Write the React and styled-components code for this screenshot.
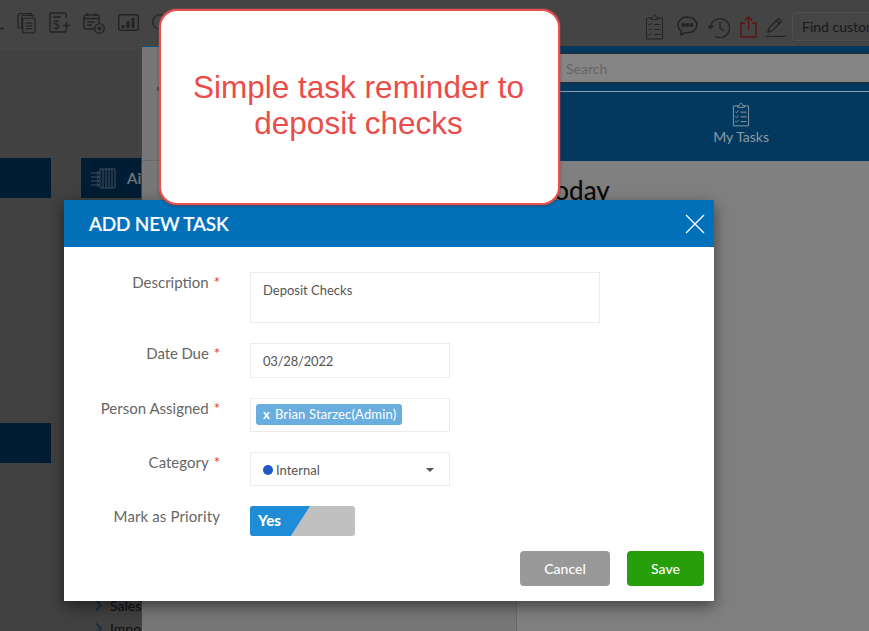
import React from "react";
import styled, { createGlobalStyle } from "styled-components";

const Global = createGlobalStyle`
  html, body { margin: 0; padding: 0; background: #424242; overflow: hidden; }
  * { box-sizing: border-box; }
`;

const Page = styled.div`
  position: relative;
  width: 869px;
  height: 631px;
  overflow: hidden;
  background: #414141;
  font-family: Lato, "Open Sans", sans-serif;
`;

/* ---------- dimmed application behind the modals ---------- */
const Toolbar = styled.header`
  height: 50px;
  background: #444444;
  display: flex;
  justify-content: space-between;
  align-items: flex-start;
  overflow: hidden;
`;
const IconGroup = styled.div`
  display: flex;
  align-items: flex-start;
  gap: ${(p) => p.$gap}px;
  margin-left: ${(p) => p.$ml || 0}px;
  padding-top: ${(p) => p.$pt || 0}px;
`;
const ToolSvg = styled.svg`
  display: block;
  flex: none;
  margin-top: ${(p) => p.$mt || 0}px;
  margin-left: ${(p) => p.$ml || 0}px;
  fill: none;
  stroke: ${(p) => p.$color || "#232323"};
  stroke-width: ${(p) => p.$sw || 1.3};
`;
const DollarMark = styled.text`
  font-family: "Liberation Sans", Arial, sans-serif;
  font-size: 12px;
  fill: #232323;
  stroke: none;
`;
const FindBox = styled.div`
  flex: none;
  width: 110px;
  height: 29px;
  margin: -2px -33px 0 6px;
  padding: 0 9px;
  border: 1px solid #4f4f4f;
  border-radius: 4px;
  background: #454545;
  color: #191919;
  font-size: 14px;
  line-height: 27px;
  white-space: nowrap;
  overflow: hidden;
`;
const Backdrop = styled.main`
  display: flex;
  gap: 30px;
  height: 581px;
  padding-top: 108px;
`;
const Column = styled.div`
  width: ${(p) => p.$w}px;
  flex: none;
`;
const Tile = styled.div`
  height: 40px;
  background: #011d33;
  margin-top: ${(p) => p.$mt || 0}px;
  display: flex;
  align-items: center;
  padding-left: 10px;
  gap: 11px;
  overflow: hidden;
  color: #6c7074;
  font-size: 15px;
  font-weight: 700;
`;
const TreeList = styled.ul`
  list-style: none;
  margin: 399px 0 0;
  padding: 0 0 0 14px;
  display: flex;
  flex-direction: column;
  gap: 6px;
`;
const TreeItem = styled.li`
  display: flex;
  align-items: center;
  gap: 8px;
  height: 17px;
  color: #0f0f0f;
  font-size: 14px;
  white-space: nowrap;
`;

/* ---------- task panel behind the dialog ---------- */
const TaskPanel = styled.section`
  position: absolute;
  left: 141px;
  top: 46px;
  right: 0;
  bottom: 0;
  display: grid;
  grid-template-columns: 376px 1fr;
`;
const ListPane = styled.div`
  background: #777777;
  border-left: 1px solid #0c5385;
  border-top: 1px solid #0c5385;
  border-right: 1px solid #696969;
`;
const ListHead = styled.div`
  height: 114px;
  border-bottom: 1px solid #686868;
  padding: 40px 0 0 15px;
`;
const BackMark = styled.span`
  display: block;
  width: 3px;
  height: 4px;
  background: #4a4a4a;
`;
const DetailPane = styled.div`
  background: #808080;
  display: flex;
  flex-direction: column;
`;
const BlueHead = styled.div`
  height: 115px;
  background: #03395f;
  padding-top: 7px;
`;
const SearchBar = styled.div`
  height: 30px;
  background: #858585;
  border-top: 1px solid #2c2c2c;
  border-bottom: 1px solid #2c2c2c;
  padding-left: 49px;
  color: #666666;
  font-size: 14px;
  line-height: 30px;
`;
const HeadRule = styled.div`
  height: 1px;
  margin: 8px 0 0;
  background: #8d9aa4;
`;
const TabRow = styled.nav`
  display: flex;
  justify-content: flex-end;
  padding: 10px 100px 0 0;
`;
const Tab = styled.div`
  display: flex;
  flex-direction: column;
  align-items: center;
  gap: 1px;
  color: #8e9aa3;
  font-size: 14px;
  line-height: 17px;
`;
const DayTitle = styled.h2`
  margin: 14px 0 0 25px;
  color: #0c0c0c;
  font-size: 26px;
  line-height: 30px;
  font-weight: 500;
`;

/* ---------- dialog ---------- */
const Dialog = styled.section`
  position: absolute;
  left: 64px;
  top: 200px;
  width: 650px;
  height: 401px;
  background: #ffffff;
  box-shadow: 0 5px 15px rgba(0, 0, 0, 0.5);
  display: flex;
  flex-direction: column;
`;
const DialogHead = styled.div`
  height: 47px;
  flex: none;
  background: #0271b9;
  display: flex;
  align-items: center;
  justify-content: space-between;
  padding: 0 9px 0 25px;
`;
const DialogTitle = styled.h1`
  margin: 0;
  color: #ffffff;
  font-size: 19px;
  font-weight: 500;
  line-height: 47px;
  letter-spacing: -0.2px;
  -webkit-text-stroke: 0.2px #ffffff;
`;
const Form = styled.div`
  flex: 1;
  display: flex;
  flex-direction: column;
  padding-top: 25px;
`;
const Row = styled.div`
  display: grid;
  grid-template-columns: 156px 1fr;
  column-gap: 30px;
  margin-bottom: 20px;
`;
const Label = styled.label`
  text-align: right;
  color: #666666;
  font-size: 15px;
  line-height: 20px;
  letter-spacing: ${(p) => p.$track || 0}px;
`;
const Star = styled.span`
  color: #e8333c;
  margin-left: 5px;
`;
const Field = styled.div`
  width: ${(p) => p.$w}px;
  height: ${(p) => p.$h}px;
  border: 1px solid #ebebeb;
  padding: ${(p) => p.$pad || "0 12px"};
  color: #555555;
  font-size: 13px;
  line-height: ${(p) => p.$lh || 34}px;
`;
const DateText = styled.span`
  letter-spacing: -0.2px;
`;
const Chip = styled.span`
  display: inline-flex;
  align-items: center;
  height: 21px;
  width: 146px;
  padding-left: 7px;
  gap: 5px;
  border-radius: 3px;
  background: #6aaddf;
  color: #ffffff;
  font-size: 13px;
  white-space: nowrap;
  letter-spacing: 0.15px;
`;
const ChipX = styled.b`
  font-weight: 700;
`;
const SelectField = styled(Field)`
  display: flex;
  align-items: center;
  gap: 3px;
  line-height: normal;
  padding-top: 1px;
`;
const Dot = styled.span`
  width: 10px;
  height: 10px;
  border-radius: 50%;
  background: #2058c8;
`;
const Caret = styled.span`
  margin-left: auto;
  margin-right: 1px;
  width: 0;
  height: 0;
  border-left: 4.5px solid transparent;
  border-right: 4.5px solid transparent;
  border-top: 4.5px solid #555555;
`;
const Toggle = styled.div`
  width: 105px;
  height: 30px;
  border-radius: 3px;
  overflow: hidden;
  background: #c0c0c0;
`;
const ToggleOn = styled.div`
  width: 60px;
  height: 100%;
  padding-left: 8px;
  background: #1e8cd6;
  clip-path: polygon(0 0, 100% 0, 68% 100%, 0 100%);
  color: #ffffff;
  font-size: 15px;
  font-weight: 900;
  line-height: 29px;
`;
const Actions = styled.div`
  margin-top: -5px;
  padding-right: 10px;
  display: flex;
  justify-content: flex-end;
  gap: 17px;
`;
const Button = styled.button`
  width: ${(p) => p.$w}px;
  height: 35px;
  border: 0;
  border-radius: 4px;
  background: ${(p) => p.$bg};
  color: #ffffff;
  font-family: inherit;
  font-size: 14px;
  font-weight: 500;
`;

/* ---------- callout ---------- */
const Callout = styled.aside`
  position: absolute;
  left: 159px;
  top: 9px;
  width: 401px;
  height: 196px;
  border: 2px solid #e9504d;
  border-radius: 18px;
  background: #ffffff;
  box-shadow: 0 0 2px rgba(240, 110, 105, 0.8), 0 1px 3px rgba(0, 0, 0, 0.45);
  display: flex;
  align-items: center;
  justify-content: center;
  text-align: center;
  padding: 0 22px 4px 20px;
  color: #ea4d49;
  font-family: "Liberation Sans", Arial, sans-serif;
  font-size: 31.5px;
  line-height: 36px;
`;

const ClipboardShape = () => (
  <>
    <path d="M6 4H1.5v21h16V4H13" />
    <path d="M6 5.5V3.5h1.8C8 2 8.6 1 9.5 1s1.5 1 1.7 2.5H13v2z" />
    <path d="M3.5 10l1.2 1.2L6.8 9M3.5 15l1.2 1.200L6.8 14M3.5 20l1.2 1.2L6.8 19M9 10.5h6.500M9 15.500h6.500M9 20.500h6.500" />
  </>
);

const Chevron = () => (
  <ToolSvg width={7} height={11} viewBox="0 0 7 11" $color="#0c2b44" $sw={1.5}>
    <path d="M1 .5l5 5-5 5" />
  </ToolSvg>
);

export default function App() {
  return (
    <Page>
      <Global />
      <Toolbar>
        <IconGroup $gap={13} $ml={-7} $pt={12}>
          <ToolSvg width={11} height={11} viewBox="0 0 11 11" $mt={11} $sw={1.5}>
            <path d="M5.500 0v11M0 5.500h11" />
          </ToolSvg>
          <ToolSvg width={19} height={22} viewBox="0 0 20 22">
            <path d="M15 3V1H3L1 3v13h4" />
            <path d="M17 5V3H5v14" />
            <rect x="6" y="6" width="13" height="15.500" rx="1.500" />
            <path d="M9 11h7M9 14h7M9 17h7" />
          </ToolSvg>
          <ToolSvg width={21} height={21} viewBox="0 0 21 21" $sw={1.4}>
            <path d="M17 6V2a1 1 0 0 0-1-1H2a1 1 0 0 0-1 1v17a1 1 0 0 0 1 1h14a1 1 0 0 0 1-1v-2" />
            <path d="M4 5h8M14 13.500h7M17.500 10v7" />
            <DollarMark x="4" y="17">$</DollarMark>
          </ToolSvg>
          <ToolSvg width={22} height={22} viewBox="0 0 22 22">
            <path d="M11 17H2.500A1.500 1.500 0 0 1 1 15.500V4.500A1.500 1.500 0 0 1 2.500 3h12A1.500 1.500 0 0 1 16 4.500V11" />
            <path d="M1 6.500h15M4.500 1v3M12.500 1v3M4 10h8M4 13h5" />
            <circle cx="16.500" cy="16.500" r="4.800" />
            <path d="M14 16.500h5M16.500 14v5" />
          </ToolSvg>
          <ToolSvg width={21} height={17} viewBox="0 0 21 17" $mt={2} $sw={1.4}>
            <rect x="0.700" y="0.700" width="19.600" height="15.600" rx="1.500" />
            <path d="M5 14V11M10 14V7M15 14V4" strokeWidth="3" />
          </ToolSvg>
          <ToolSvg width={16} height={16} viewBox="0 0 16 16" $mt={2}>
            <circle cx="8" cy="8" r="7.300" />
          </ToolSvg>
        </IconGroup>
        <IconGroup $gap={0} $pt={14}>
          <ToolSvg width={19} height={26} viewBox="0 0 19 26" $sw={1}>
            <ClipboardShape />
          </ToolSvg>
          <ToolSvg width={21} height={21} viewBox="0 0 21 21" $mt={2} $ml={13} $sw={1.5}>
            <path d="M10.500 1C5 1 1 4.400 1 9c0 2.600 1.200 4.600 3.200 6L4 19l4.500-2.400c.7.100 1.300.200 2 .200 5.200 0 9.500-3.400 9.500-7.800S15.700 1 10.500 1z" />
            <circle cx="6.500" cy="9" r="1.300" fill="#232323" />
            <circle cx="10.500" cy="9" r="1.300" fill="#232323" />
            <circle cx="14.500" cy="9" r="1.300" fill="#232323" />
          </ToolSvg>
          <ToolSvg width={22} height={21} viewBox="0 0 22 21" $mt={3} $ml={10}>
            <path d="M2.500 11a9.500 9.500 0 1 1 5 8.500" />
            <path d="M0 8.500l2.500 3 3-3M12 5v6l4 3" />
          </ToolSvg>
          <ToolSvg width={17} height={22} viewBox="0 0 17 22" $mt={2} $ml={10} $color="#5a1212">
            <path d="M5 7H1v14h15V7h-4M8.500 14V1M5 4.500L8.500 1 12 4.500" />
          </ToolSvg>
          <ToolSvg width={20} height={20} viewBox="0 0 20 20" $mt={3} $ml={9}>
            <path d="M2 15l1-4L12.500 1.500l3 3L6 14zM10.500 3.500l3 3" />
            <path d="M0.500 19.500h19" />
          </ToolSvg>
          <FindBox>Find customer</FindBox>
        </IconGroup>
      </Toolbar>

      <Backdrop>
        <Column $w={51}>
          <Tile />
          <Tile $mt={225} />
        </Column>
        <Column $w={60}>
          <Tile>
            <ToolSvg width={25} height={21} viewBox="0 0 25 21" $color="#4a555e" $sw={0.9}>
              <path d="M9 1h15v19H9zM12 1v19M15 1v19M18 1v19M21 1v19" />
              <path d="M0 5h8M0 9h8M0 13h8M0 17h8M6 3.500L8 5 6 6.500M6 7.500L8 9l-2 1.500M6 11.500L8 13l-2 1.500M6 15.500L8 17l-2 1.500" />
            </ToolSvg>
            Ai
          </Tile>
          <TreeList>
            <TreeItem><Chevron />Sales</TreeItem>
            <TreeItem><Chevron />Import</TreeItem>
          </TreeList>
        </Column>
      </Backdrop>

      <TaskPanel>
        <ListPane>
          <ListHead>
            <BackMark />
          </ListHead>
        </ListPane>
        <DetailPane>
          <BlueHead>
            <SearchBar>Search</SearchBar>
            <HeadRule />
            <TabRow>
              <Tab>
                <ToolSvg width={18} height={25} viewBox="0 0 19 26" $color="#8e9aa3" $sw={1}>
                  <ClipboardShape />
                </ToolSvg>
                My Tasks
              </Tab>
            </TabRow>
          </BlueHead>
          <DayTitle>Today</DayTitle>
        </DetailPane>
      </TaskPanel>

      <Dialog>
        <DialogHead>
          <DialogTitle>ADD NEW TASK</DialogTitle>
          <svg width="20" height="20" viewBox="0 0 20 20" fill="none" stroke="#ffffff" strokeWidth="1.300">
            <path d="M1 1l18 18M19 1L1 19" />
          </svg>
        </DialogHead>
        <Form>
          <Row>
            <Label>Description<Star>*</Star></Label>
            <Field $w={350} $h={51} $pad="7px 12px" $lh={20}>Deposit Checks</Field>
          </Row>
          <Row>
            <Label $track={-0.1}>Date Due<Star>*</Star></Label>
            <Field $w={200} $h={35}><DateText>03/28/2022</DateText></Field>
          </Row>
          <Row>
            <Label>Person Assigned<Star>*</Star></Label>
            <Field $w={200} $h={34} $pad="5px" $lh={21}>
              <Chip><ChipX>x</ChipX>Brian Starzec(Admin)</Chip>
            </Field>
          </Row>
          <Row>
            <Label>Category<Star>*</Star></Label>
            <SelectField $w={200} $h={34} $pad="0 14px 0 12px">
              <Dot />Internal<Caret />
            </SelectField>
          </Row>
          <Row>
            <Label $track={0.12}>Mark as Priority</Label>
            <Toggle><ToggleOn>Yes</ToggleOn></Toggle>
          </Row>
          <Actions>
            <Button $w={90} $bg="#999999">Cancel</Button>
            <Button $w={77} $bg="#279f0b">Save</Button>
          </Actions>
        </Form>
      </Dialog>

      <Callout>Simple task reminder to deposit checks</Callout>
    </Page>
  );
}
